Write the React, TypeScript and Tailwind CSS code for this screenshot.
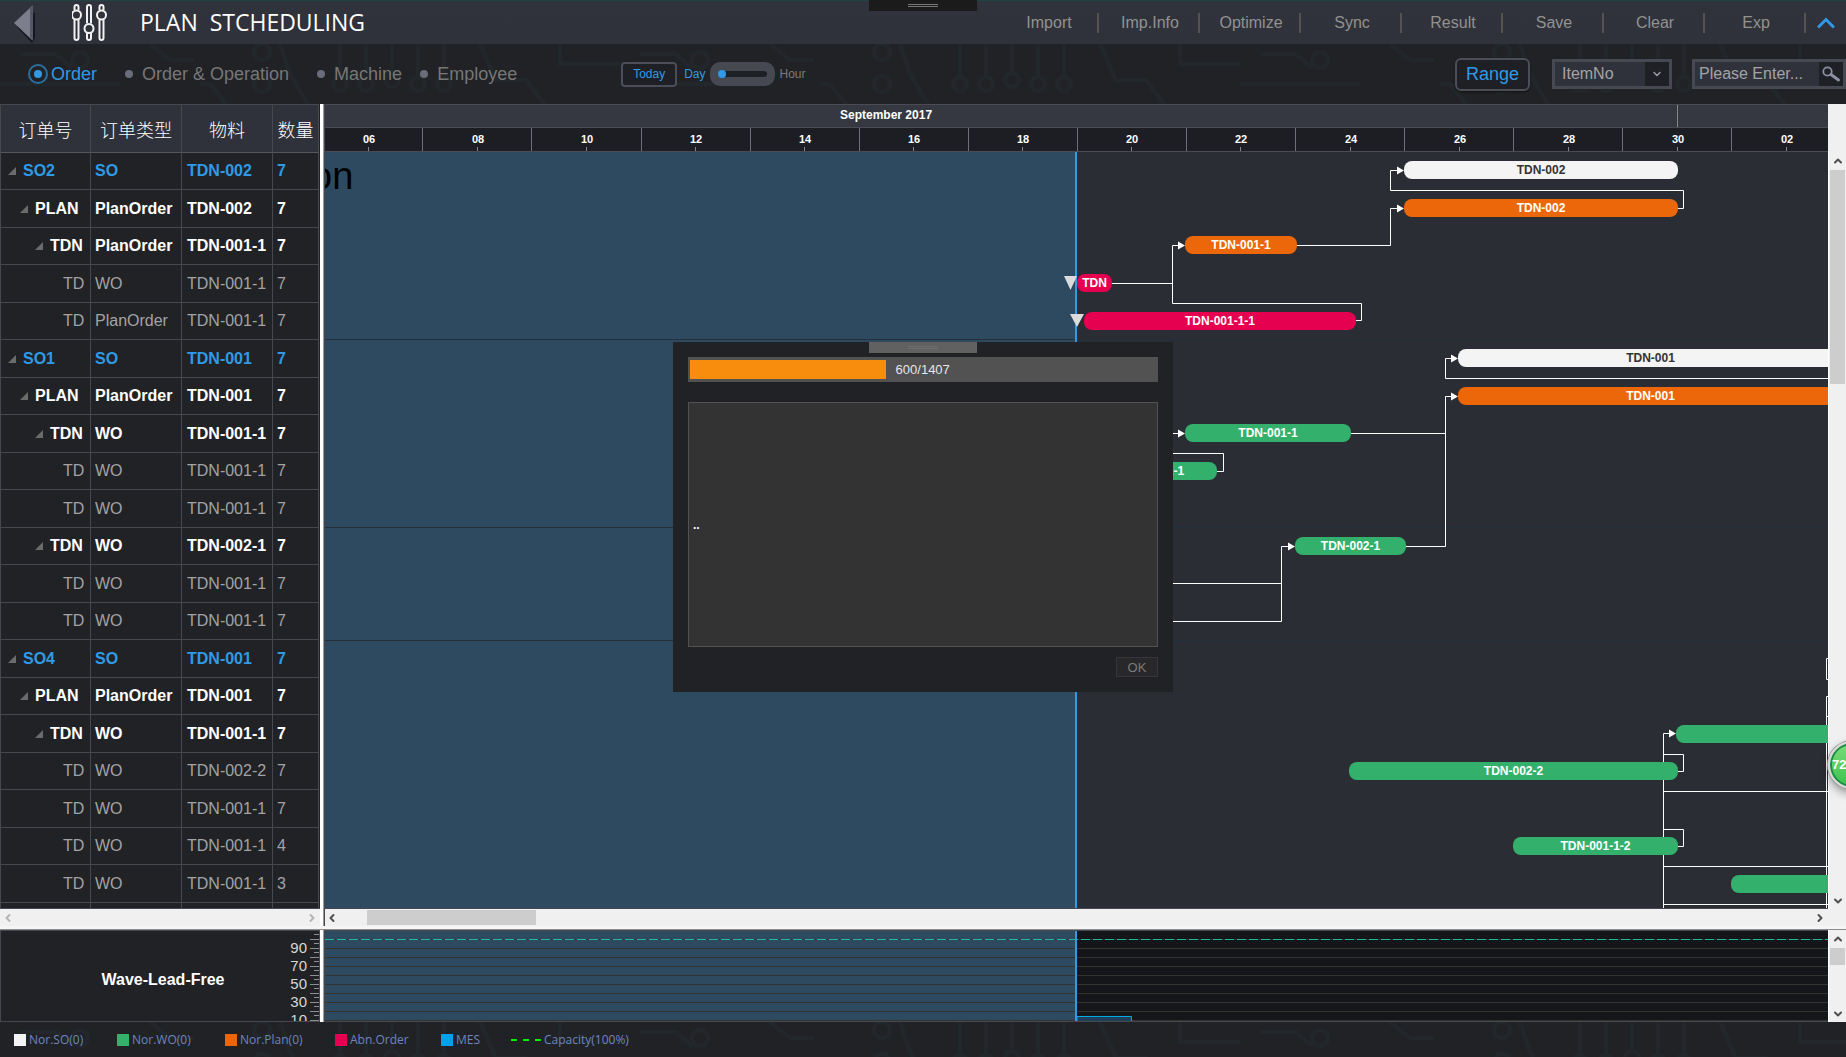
import { ChevronDown, ChevronLeft, ChevronRight, ChevronUp } from 'lucide-react';

type Row = { level: number; name: string; type: string; item: string; qty: number };

type Bar = { row: number; x: number; end: number; label: string; color: string };

const DAY_WIDTH = 54.54;
const TODAY = 751;

const menu = ['Import', 'Imp.Info', 'Optimize', 'Sync', 'Result', 'Save', 'Clear', 'Exp'];

const views = [
  { label: 'Order', gap: 'mr-[22px]' },
  { label: 'Order & Operation', gap: 'mr-[22px]' },
  { label: 'Machine', gap: 'mr-3' },
  { label: 'Employee', gap: '' },
];

const rows: Row[] = [
  { level: 0, name: 'SO2', type: 'SO', item: 'TDN-002', qty: 7 },
  { level: 1, name: 'PLAN', type: 'PlanOrder', item: 'TDN-002', qty: 7 },
  { level: 2, name: 'TDN', type: 'PlanOrder', item: 'TDN-001-1', qty: 7 },
  { level: 3, name: 'TD', type: 'WO', item: 'TDN-001-1', qty: 7 },
  { level: 3, name: 'TD', type: 'PlanOrder', item: 'TDN-001-1', qty: 7 },
  { level: 0, name: 'SO1', type: 'SO', item: 'TDN-001', qty: 7 },
  { level: 1, name: 'PLAN', type: 'PlanOrder', item: 'TDN-001', qty: 7 },
  { level: 2, name: 'TDN', type: 'WO', item: 'TDN-001-1', qty: 7 },
  { level: 3, name: 'TD', type: 'WO', item: 'TDN-001-1', qty: 7 },
  { level: 3, name: 'TD', type: 'WO', item: 'TDN-001-1', qty: 7 },
  { level: 2, name: 'TDN', type: 'WO', item: 'TDN-002-1', qty: 7 },
  { level: 3, name: 'TD', type: 'WO', item: 'TDN-001-1', qty: 7 },
  { level: 3, name: 'TD', type: 'WO', item: 'TDN-001-1', qty: 7 },
  { level: 0, name: 'SO4', type: 'SO', item: 'TDN-001', qty: 7 },
  { level: 1, name: 'PLAN', type: 'PlanOrder', item: 'TDN-001', qty: 7 },
  { level: 2, name: 'TDN', type: 'WO', item: 'TDN-001-1', qty: 7 },
  { level: 3, name: 'TD', type: 'WO', item: 'TDN-002-2', qty: 7 },
  { level: 3, name: 'TD', type: 'WO', item: 'TDN-001-1', qty: 7 },
  { level: 3, name: 'TD', type: 'WO', item: 'TDN-001-1', qty: 4 },
  { level: 3, name: 'TD', type: 'WO', item: 'TDN-001-1', qty: 3 },
];

const levelStyles = [
  { text: 'text-[#2f9ae6] font-bold', pad: 'pl-[7px]' },
  { text: 'text-white font-bold', pad: 'pl-[19px]' },
  { text: 'text-white font-bold', pad: 'pl-[34px]' },
  { text: 'text-[#a3a3a5]', pad: 'pl-[62px]' },
];

const WHITE = 'bg-[#f4f4f4] text-[#333]';
const ORANGE = 'bg-[#ec670a] text-white';
const PINK = 'bg-[#e50050] text-white';
const GREEN = 'bg-[#33b06c] text-white';

const bars: Bar[] = [
  { row: 0, x: 1079, end: 1353, label: 'TDN-002', color: WHITE },
  { row: 1, x: 1079, end: 1353, label: 'TDN-002', color: ORANGE },
  { row: 2, x: 860, end: 972, label: 'TDN-001-1', color: ORANGE },
  { row: 3, x: 752, end: 787, label: 'TDN', color: PINK },
  { row: 4, x: 759, end: 1031, label: 'TDN-001-1-1', color: PINK },
  { row: 5, x: 1133, end: 1518, label: 'TDN-001', color: WHITE },
  { row: 6, x: 1133, end: 1518, label: 'TDN-001', color: ORANGE },
  { row: 7, x: 860, end: 1026, label: 'TDN-001-1', color: GREEN },
  { row: 8, x: 767, end: 892, label: 'TDN-001-1', color: GREEN },
  { row: 10, x: 970, end: 1081, label: 'TDN-002-1', color: GREEN },
  { row: 15, x: 1351, end: 1700, label: '', color: GREEN },
  { row: 16, x: 1024, end: 1353, label: 'TDN-002-2', color: GREEN },
  { row: 18, x: 1188, end: 1353, label: 'TDN-001-1-2', color: GREEN },
  { row: 19, x: 1406, end: 1700, label: '', color: GREEN },
];

// dependency lines, in chart coordinates
const links = [
  'M1352 56.5H1358.5V38.5H1065.5V18.5H1078',
  'M971 93.5H1065.5V56.5H1078',
  'M786 131.5H847.5M1030 168.5H1036.5V151.5H847.5V93.5H859',
  'M1700 226.5H1120.5V206.5H1132',
  'M1026 281.5H1120.5M1080 394.5H1120.5V244.5H1132',
  'M830 281.5H859',
  'M892 319.5H898.5V301.5H820',
  'M820 431.5H956.5M820 469.5H956.5V394.5H969',
  'M1700 506.5H1501.5V527.5H1700',
  'M1700 544.5H1501.5V800M1501.5 564.5H1700',
  'M1338.5 800V581.5H1350',
  'M1338.5 602.5H1358.5V619.5H1352M1338.5 677.5H1358.5V694.5H1352',
  'M1338.5 639.5H1700M1338.5 714.5H1700M1338.5 752.5H1700',
];

const arrows = [
  [1079, 18],
  [1079, 56],
  [860, 93],
  [1133, 206],
  [1133, 244],
  [860, 281],
  [970, 394],
  [1351, 581],
];

const legend = [
  { label: 'Nor.SO(0)', color: 'bg-[#f4f4f4]', width: 'w-[103px]' },
  { label: 'Nor.WO(0)', color: 'bg-[#33b06c]', width: 'w-[108px]' },
  { label: 'Nor.Plan(0)', color: 'bg-[#ec670a]', width: 'w-[110px]' },
  { label: 'Abn.Order', color: 'bg-[#e50050]', width: 'w-[106px]' },
  { label: 'MES', color: 'bg-[#00a0e9]', width: 'w-[70px]' },
];

function dayX(day: number) {
  return Math.round(806.4 + (day - 20) * DAY_WIDTH);
}

function Circuit() {
  return (
    <svg className="pointer-events-none absolute inset-0 h-full w-full" aria-hidden="true">
      <defs>
        <pattern id="circuit" width="620" height="64" patternUnits="userSpaceOnUse">
          <g fill="none" stroke="#21272a" strokeWidth="4">
            <path d="M0 40H120M20 10h36l16 14M150 0l20 16h24M200 40h10l24 30M280 0l10 30 20 34M340 0v34M366 0v34M392 0v30M418 0v34M444 0v34M480 0l16 36h30l30 40M560 0v20h60" />
            <circle cx="80" cy="16" r="8" />
            <circle cx="262" cy="8" r="8" />
            <circle cx="262" cy="40" r="8" />
            <circle cx="340" cy="40" r="7" />
            <circle cx="366" cy="40" r="7" />
            <circle cx="392" cy="36" r="7" />
            <circle cx="418" cy="40" r="7" />
            <circle cx="444" cy="40" r="7" />
          </g>
        </pattern>
      </defs>
      <rect width="100%" height="100%" fill="url(#circuit)" />
    </svg>
  );
}

function Header() {
  return (
    <header className="flex h-11 shrink-0 items-center border-t border-[#1e4446] bg-linear-to-b from-[#30323c] to-[#2f313b]">
      <button aria-label="Back" className="ml-3 w-6">
        <svg width="24" height="42" viewBox="0 0 24 42">
          <path d="M5 25 20 41 23 36V10Z" fill="#17181c" />
          <path d="M2 21 20 4V38Z" fill="#7d7e8c" />
          <path d="M21 3 18 6V35L21 39Z" fill="#55566a" />
        </svg>
      </button>
      <svg className="ml-9" width="36" height="38" viewBox="0 0 36 38" fill="none" stroke="#f2f2f2" strokeWidth="2">
        <path d="M2.500 6V3a2 2 0 0 1 4 0v3M2.500 15.500V34a2 2 0 0 0 4 0V15.500" />
        <circle cx="4.500" cy="11" r="4.500" />
        <path d="M15 19.500V3a2 2 0 0 1 4 0v16.500M15 29v5a2 2 0 0 0 4 0v-5" />
        <circle cx="17" cy="24.500" r="4.500" />
        <path d="M27.500 6V3a2 2 0 0 1 4 0v3M27.500 15.500V34a2 2 0 0 0 4 0V15.500" />
        <circle cx="29.500" cy="11" r="4.500" />
      </svg>
      <h1 className="ml-8 whitespace-pre font-['Open_Sans',sans-serif] text-[23px] text-white">PLAN  STCHEDULING</h1>
      <nav className="ml-auto flex items-center">
        {menu.map(m => (
          <button key={m} className="h-5 w-[101px] border-r-2 border-[#55534f] pl-[3px] text-base leading-5 text-[#92928f]">
            {m}
          </button>
        ))}
        <button aria-label="Collapse" className="flex w-10 justify-center text-[#2f9ae6]">
          <svg width="18" height="12" viewBox="0 0 18 12" fill="none" stroke="currentColor" strokeWidth="3">
            <path d="M1 10.500 9 2.500 17 10.500" />
          </svg>
        </button>
      </nav>
    </header>
  );
}

function Toolbar() {
  return (
    <div className="relative flex h-[60px] shrink-0 items-center bg-[#212226]">
      <Circuit />
      <div className="relative flex flex-1 items-center">
        <fieldset className="ml-7 flex items-center">
          {views.map((v, i) => (
            <label key={v.label} className={`flex items-center gap-[3px] text-lg text-[#777777] has-checked:text-[#2f9ae6] ${v.gap}`}>
              <input
                type="radio"
                name="view"
                defaultChecked={i === 0}
                className="grid size-5 appearance-none place-content-center rounded-full border-2 border-transparent before:size-2 before:rounded-full before:bg-[#6b6c7a] checked:border-[#2b6f9f] checked:before:bg-[#2f9ae6]"
              />
              {v.label}
            </label>
          ))}
        </fieldset>
        <button className="ml-[104px] h-[25px] w-14 rounded border-2 border-[#4b4d58] bg-[#1f2025] text-xs text-[#2f9ae6]">
          Today
        </button>
        <label htmlFor="scale" className="ml-[7px] text-xs text-[#2f9ae6]">Day</label>
        <div className="ml-1 flex h-6 w-[65px] items-center rounded-[10px] bg-[#464852] px-2">
          <input
            id="scale"
            type="range"
            defaultValue={0}
            className="h-[6px] w-full appearance-none rounded-full bg-[#1f2025] [&::-webkit-slider-thumb]:size-2 [&::-webkit-slider-thumb]:appearance-none [&::-webkit-slider-thumb]:rounded-full [&::-webkit-slider-thumb]:bg-[#2f9ae6]"
          />
        </div>
        <span className="ml-[5px] text-xs text-[#7b7b7b]">Hour</span>
        <button className="ml-auto h-[33px] w-[75px] rounded-md border-2 border-[#4b4d58] bg-[#1f2025] text-lg leading-none text-[#2f9ae6] shadow-[0_1px_2px_#111]">
          Range
        </button>
        <div className="relative ml-[22px] h-[30px] w-[120px] border-3 border-[#464852]">
          <select aria-label="Search field" className="h-full w-full appearance-none bg-[#30323b] pl-[7px] text-base leading-6 text-[#a3a3a5]">
            <option>ItemNo</option>
          </select>
          <span className="pointer-events-none absolute inset-y-0 right-0 flex w-6 items-center justify-center bg-[#1f2025]">
            <ChevronDown className="size-3 text-[#9a9ba5]" strokeWidth={3} />
          </span>
        </div>
        <div className="ml-5 flex h-[30px] w-[154px] border-3 border-[#464852] bg-[#30323b]">
          <input
            aria-label="Search"
            placeholder="Please Enter..."
            className="min-w-0 flex-1 pl-1 text-base text-[#a3a3a5] placeholder:text-[#a3a3a5]"
          />
          <button aria-label="Find" className="flex w-6 items-center justify-center bg-[#1f2025]">
            <svg width="18" height="16" viewBox="0 0 18 16" fill="none" stroke="#8d90a2">
              <circle cx="5.500" cy="5.500" r="4.200" strokeWidth="1.800" />
              <path d="M9 8.500 16.500 14" strokeWidth="2.800" strokeLinecap="round" />
            </svg>
          </button>
        </div>
      </div>
    </div>
  );
}

function OrderTable() {
  return (
    <table className="w-full table-fixed border-separate border-spacing-0 border-l border-[#46474f] bg-[#212226] text-base leading-5">
      <colgroup>
        <col className="w-[90px]" />
        <col className="w-[91px]" />
        <col className="w-[91px]" />
        <col />
      </colgroup>
      <thead>
        <tr className="h-[49px] bg-[#30323b] font-['Noto_Sans_CJK_SC',sans-serif] text-lg text-white">
          {['订单号', '订单类型', '物料', '数量'].map(h => (
            <th key={h} className="overflow-hidden border-t border-r border-b border-t-[#46474f] border-r-[#46474f] border-b-[#55565e] p-0 font-light whitespace-nowrap">
              {h}
            </th>
          ))}
        </tr>
      </thead>
      <tbody>
        {rows.map((r, i) => {
          const s = levelStyles[r.level];
          return (
            <tr key={i} className={`${i % 2 ? 'h-[38px]' : 'h-[37px]'} ${s.text} whitespace-nowrap`}>
              <td className={`border-r border-b border-[#46474f] p-0 ${s.pad}`}>
                <span className="flex items-center gap-[7px]">
                  {r.level < 3 && (
                    <svg width="8" height="8" viewBox="0 0 8 8"><path d="M8 0V8H0Z" fill="#6b6b6b" /></svg>
                  )}
                  {r.name}
                </span>
              </td>
              <td className="border-r border-b border-[#46474f] p-0 pl-1">{r.type}</td>
              <td className="border-r border-b border-[#46474f] p-0 pl-[5px]">{r.item}</td>
              <td className="border-r border-b border-[#46474f] p-0 pl-1">{r.qty}</td>
            </tr>
          );
        })}
        <tr className="h-[37px]">
          {[0, 1, 2, 3].map(c => <td key={c} className="border-r border-[#46474f]" />)}
        </tr>
      </tbody>
    </table>
  );
}

function Timeline() {
  const days = Array.from({ length: 14 }, (_, i) => 6 + i * 2);
  return (
    <div className="h-12 shrink-0 overflow-hidden text-white">
      <div className="relative h-6 border-y border-[#4a4b53] bg-[#363841] text-xs leading-5 font-bold">
        <span className="absolute left-[515px]">September 2017</span>
        <span className="absolute top-0 h-full w-px bg-[#85868c]" style={{ left: dayX(30) }} />
      </div>
      <div className="relative h-6 border-b border-[#4a4b53] bg-[#1d1e23] text-[11px] leading-[22px] font-bold">
        {days.map(d => (
          <div key={d}>
            <span className="absolute top-0 w-6 -translate-x-1/2 text-center" style={{ left: dayX(d) + 1 }}>
              {String(d > 30 ? d - 30 : d).padStart(2, '0')}
            </span>
            <span className="absolute bottom-0 h-1 w-px bg-[#85868c]" style={{ left: dayX(d) }} />
            <span className="absolute top-0 h-full w-px bg-[#6f7077]" style={{ left: dayX(d + 1) }} />
          </div>
        ))}
      </div>
    </div>
  );
}

function Chart() {
  return (
    <div className="relative min-h-0 flex-1 overflow-hidden border-b border-[#46474f] bg-[#2b2d34]">
      <div className="absolute inset-y-0 left-0 w-[750px] bg-[#2e4a60]" />
      {[187, 375, 488].map(y => (
        <div key={y} className="absolute left-0 h-px w-full bg-[#25303a]" style={{ top: y }} />
      ))}
      <span className="absolute top-0 left-[-14px] text-[38px] leading-[48px] text-black">on</span>
      <div className="absolute inset-y-0 w-[2px] bg-[#2f9ae6]" style={{ left: TODAY - 1 }} />
      <svg className="absolute inset-0 h-full w-full" fill="none" stroke="#fff">
        {links.map(d => <path key={d} d={d} />)}
      </svg>
      {bars.map(b => (
        <div
          key={b.row}
          className={`absolute h-[18px] overflow-hidden rounded-lg text-center text-xs leading-[18px] font-bold whitespace-nowrap ${b.color}`}
          style={{ left: b.x, width: b.end - b.x, top: Math.round(9.3 + b.row * 37.55) }}
        >
          {b.label}
        </div>
      ))}
      <svg className="absolute inset-0 h-full w-full">
        {arrows.map(([x, y]) => (
          <path key={`${x}-${y}`} d={`M${x - 7} ${y - 3.5}L${x} ${y + 0.5}L${x - 7} ${y + 4.5}Z`} fill="#fff" />
        ))}
        <path d="M739 124H752L745.500 138ZM745 162H759L752 175Z" fill="#dcdcdc" />
      </svg>
    </div>
  );
}

function VScroll({ thumb }: { thumb: string }) {
  return (
    <div className="flex min-h-0 flex-1 flex-col items-center border-l border-white bg-[#f0f0f0] text-[#505050]">
      <ChevronUp className="my-[3px] size-3 shrink-0" strokeWidth={4} />
      <div className={`w-[15px] bg-[#cdcdcd] ${thumb}`} />
      <ChevronDown className="mt-auto mb-[2px] size-3 shrink-0" strokeWidth={4} />
    </div>
  );
}

function Gantt() {
  return (
    <section className="flex min-h-0 flex-1">
      <div className="flex w-80 shrink-0 flex-col">
        <div className="min-h-0 flex-1 overflow-hidden border-b border-[#46474f] pr-px">
          <OrderTable />
        </div>
        <div className="flex h-[17px] items-center justify-between bg-[#f0f0f0] px-[2px] text-[#b5b5b5]">
          <ChevronLeft className="size-3" strokeWidth={4} />
          <ChevronRight className="size-3" strokeWidth={4} />
        </div>
      </div>
      <div className="w-1 shrink-0 border-r border-[#9a9a9a] bg-white" />
      <div className="flex min-w-0 flex-1 flex-col border-l border-[#46474f]">
        <Timeline />
        <Chart />
        <div className="flex h-[17px] items-center bg-[#f0f0f0] text-[#505050]">
          <ChevronLeft className="ml-px size-3" strokeWidth={4} />
          <div className="ml-[29px] h-[15px] w-[169px] bg-[#cdcdcd]" />
          <ChevronRight className="mr-[2px] ml-auto size-3" strokeWidth={4} />
        </div>
      </div>
      <div className="flex w-[18px] shrink-0 flex-col bg-[#f0f0f0] pt-12">
        <VScroll thumb="h-[214px]" />
        <div className="h-[17px]" />
      </div>
    </section>
  );
}

function LoadPanel() {
  const lines = [18, 27, 36, 45, 54, 63, 72, 81, 90];
  return (
    <section className="flex h-[92px] shrink-0">
      <div className="relative flex w-80 shrink-0 overflow-hidden border border-[#46474f] bg-[#212226]">
        <h2 className="w-[325px] self-center pt-2 pl-[6px] text-center text-base font-bold text-white">Wave-Lead-Free</h2>
        <div className="absolute top-2 right-3 text-[15px] leading-[18px] text-[#d6d6d6]">
          {[90, 70, 50, 30, 10].map(n => (
            <div key={n} className="h-[18px] w-[18px] text-right">{n}</div>
          ))}
        </div>
        <svg className="absolute top-0 right-0" width="9" height="92" stroke="#8d8e93">
          {[9, ...lines].map(y => (
            <path key={y} d={`M0 ${y - 0.5}H9M4 ${y - 5.5}H9`} />
          ))}
        </svg>
      </div>
      <div className="w-1 shrink-0 border-r border-[#9a9a9a] bg-white" />
      <div className="relative min-w-0 flex-1 overflow-hidden border-y border-l border-[#46474f] bg-[#131518]">
        <div className="absolute inset-y-0 left-0 w-[750px] bg-[#2e4a60]" />
        <svg className="absolute inset-0 h-full w-full">
          <defs>
            <pattern id="mesh" width="4" height="4" patternUnits="userSpaceOnUse">
              <path d="M0 0h1v1H0zM2 2h1v1H2z" fill="#1b1e21" />
            </pattern>
          </defs>
          <rect x="752" width="100%" height="100%" fill="url(#mesh)" />
          {lines.map(y => <path key={y} d={`M0 ${y - 0.5}H3000`} stroke="#333330" />)}
          <path d="M0 8.500H3000" stroke="#333330" />
          <path d="M0 8.500H3000" stroke="#22b899" strokeDasharray="9 3" />
          <path d="M752 100V85.500H806.500V100" fill="#1d3f58" stroke="#00a8e6" />
          <path d="M751 0V100" stroke="#2f9ae6" strokeWidth="2" />
        </svg>
      </div>
      <div className="flex w-[18px] shrink-0">
        <VScroll thumb="h-[17px]" />
      </div>
    </section>
  );
}

function Legend() {
  return (
    <footer className="relative h-[35px] shrink-0 bg-[#212226]">
      <Circuit />
      <ul className="relative flex h-full items-center pl-[14px] font-['Open_Sans',sans-serif] text-xs text-[#6d86bd]">
        {legend.map(l => (
          <li key={l.label} className={`flex items-center gap-[3px] ${l.width}`}>
            <span className={`size-3 shrink-0 ${l.color}`} />
            {l.label}
          </li>
        ))}
        <li className="flex items-center gap-[3px]">
          <svg width="30" height="2"><path d="M0 1H30" stroke="#00f000" strokeWidth="2" strokeDasharray="6 6" /></svg>
          Capacity(100%)
        </li>
      </ul>
    </footer>
  );
}

function ProgressDialog() {
  const done = 600;
  const total = 1407;
  return (
    <div className="absolute inset-0 flex items-center justify-center pb-[23px]">
      <div role="dialog" aria-label="Progress" className="relative flex h-[350px] w-[500px] flex-col bg-[#212226] px-[15px] pt-[15px]">
        <div className="absolute top-0 left-[196px] flex h-[11px] w-[108px] flex-col items-center justify-center gap-px bg-[#616161]">
          <span className="h-px w-[30px] bg-[#6e6e6e]" />
          <span className="h-px w-[30px] bg-[#6e6e6e]" />
        </div>
        <div role="progressbar" aria-valuenow={done} aria-valuemax={total} className="flex h-[25px] items-center bg-[#525252] pl-[2px]">
          <div className="h-[19px] bg-[#f88c0c]" style={{ width: `${(done / total) * 98}%` }} />
          <span className="pl-[10px] text-[13px] text-[#e6e6e6]">{done}/{total}</span>
        </div>
        <div className="mt-5 flex h-[245px] items-center border border-[#525252] bg-[#333333] pl-1 text-xs font-bold text-white">
          ..
        </div>
        <button className="mt-[10px] h-5 w-[42px] self-end border border-[#36363a] bg-[#28282a] text-[13px] leading-none text-[#7b7b7b]">
          OK
        </button>
      </div>
    </div>
  );
}

export default function App() {
  return (
    <div className="relative flex h-screen flex-col overflow-hidden bg-[#212226] font-['Liberation_Sans',Arial,sans-serif]">
      <Header />
      <Toolbar />
      <Gantt />
      <div className="h-1 shrink-0 border-b border-[#8d8d8d] bg-[#f5f5f5]" />
      <LoadPanel />
      <Legend />

      {/* pull-down handle */}
      <div className="absolute top-0 left-1/2 flex h-[11px] w-[108px] -translate-x-1/2 flex-col items-center justify-center gap-px bg-[#1b1b1b]">
        <span className="h-px w-[30px] bg-[#777]" />
        <span className="h-px w-[30px] bg-[#777]" />
      </div>
      <ProgressDialog />
      <div className="absolute top-[741px] right-[-30px] flex size-12 items-center rounded-full border-2 border-[#d9d9d9] bg-linear-to-b from-[#7bdc7b] to-[#34c24a] pl-[2px] text-[13px] font-bold text-white shadow-[0_4px_10px_#0006] ring-1 ring-[#999] inset-ring-2 inset-ring-[#1f8a48]">
        72
      </div>
    </div>
  );
}
